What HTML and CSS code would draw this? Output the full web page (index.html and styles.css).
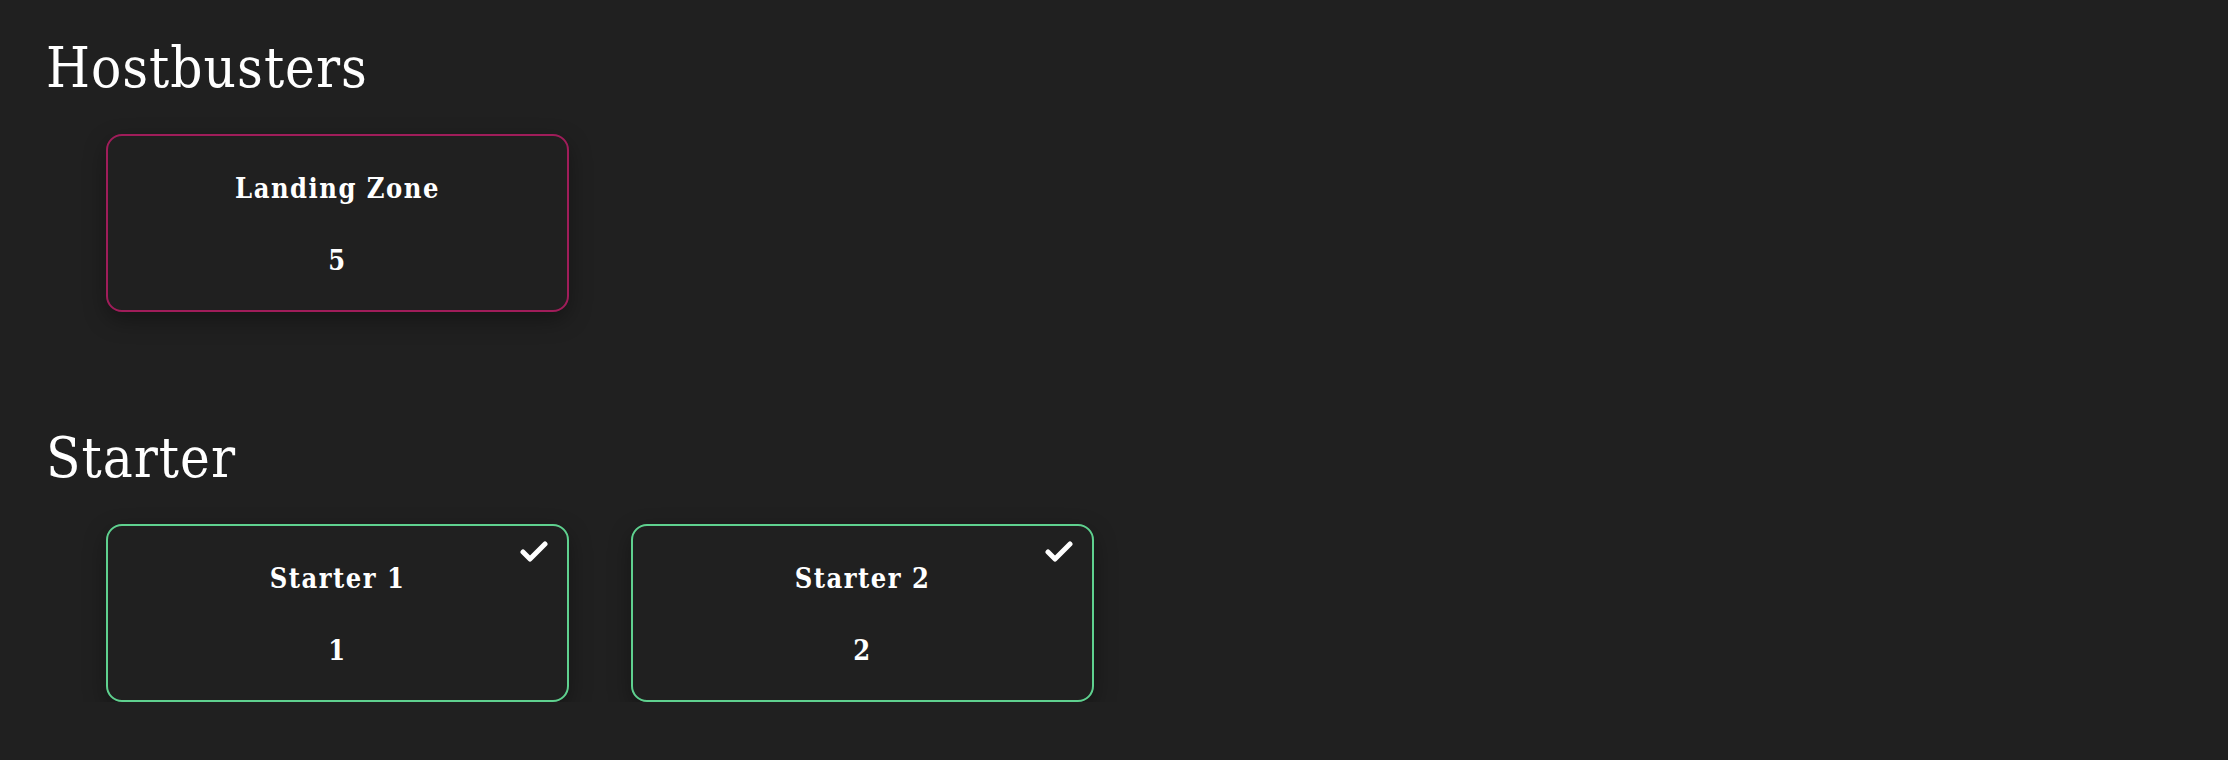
FILE: index.html
```html
<!DOCTYPE html>
<html lang="en">
<head>
<meta charset="utf-8">
<title>Hostbusters</title>
<link rel="stylesheet" href="styles.css">
</head>
<body>
<main class="page">
  <section class="group">
    <h1 class="group-title">Hostbusters</h1>
    <div class="cards">
      <div class="card card-danger">
        <div class="card-name">Landing Zone</div>
        <div class="card-count">5</div>
      </div>
    </div>
  </section>
  <section class="group">
    <h1 class="group-title">Starter</h1>
    <div class="cards">
      <div class="card card-ok">
        <svg class="check" viewBox="0 0 28 21" width="28" height="21"><path d="M3 11 L10 18 L25 3" fill="none" stroke="#fff" stroke-width="5" stroke-linecap="round" stroke-linejoin="round"/></svg>
        <div class="card-name">Starter 1</div>
        <div class="card-count">1</div>
      </div>
      <div class="card card-ok">
        <svg class="check" viewBox="0 0 28 21" width="28" height="21"><path d="M3 11 L10 18 L25 3" fill="none" stroke="#fff" stroke-width="5" stroke-linecap="round" stroke-linejoin="round"/></svg>
        <div class="card-name">Starter 2</div>
        <div class="card-count">2</div>
      </div>
    </div>
  </section>
</main>
</body>
</html>
```
FILE: styles.css
```css
html, body {
  margin: 0;
  background: #202020;
}
body {
  font-family: "DejaVu Serif", "Liberation Serif", serif;
  font-stretch: condensed;
  color: #ffffff;
}
.page {
  padding: 38px 0 0 46px;
  display: flex;
  flex-direction: column;
  gap: 116px;
}
.group {
  display: flex;
  flex-direction: column;
  gap: 36px;
}
.group-title {
  margin: 0;
  font-size: 56px;
  line-height: 60px;
  font-weight: normal;
  letter-spacing: 1px;
}
.cards {
  display: flex;
  gap: 62px;
  margin-left: 60px;
}
.card {
  position: relative;
  box-sizing: border-box;
  width: 463px;
  height: 178px;
  border: 2px solid;
  border-radius: 16px;
  background: #202020;
  box-shadow: 0 8px 22px rgba(0, 0, 0, 0.35);
  display: flex;
  flex-direction: column;
  align-items: center;
  padding-top: 37px;
  gap: 40px;
}
.card-danger { border-color: #a01d5a; }
.card-ok { border-color: #5fd18f; }
.card-name, .card-count {
  font-size: 27px;
  line-height: 32px;
  font-weight: bold;
  letter-spacing: 1.5px;
}
.check {
  position: absolute;
  top: 15px;
  right: 19px;
}
```
